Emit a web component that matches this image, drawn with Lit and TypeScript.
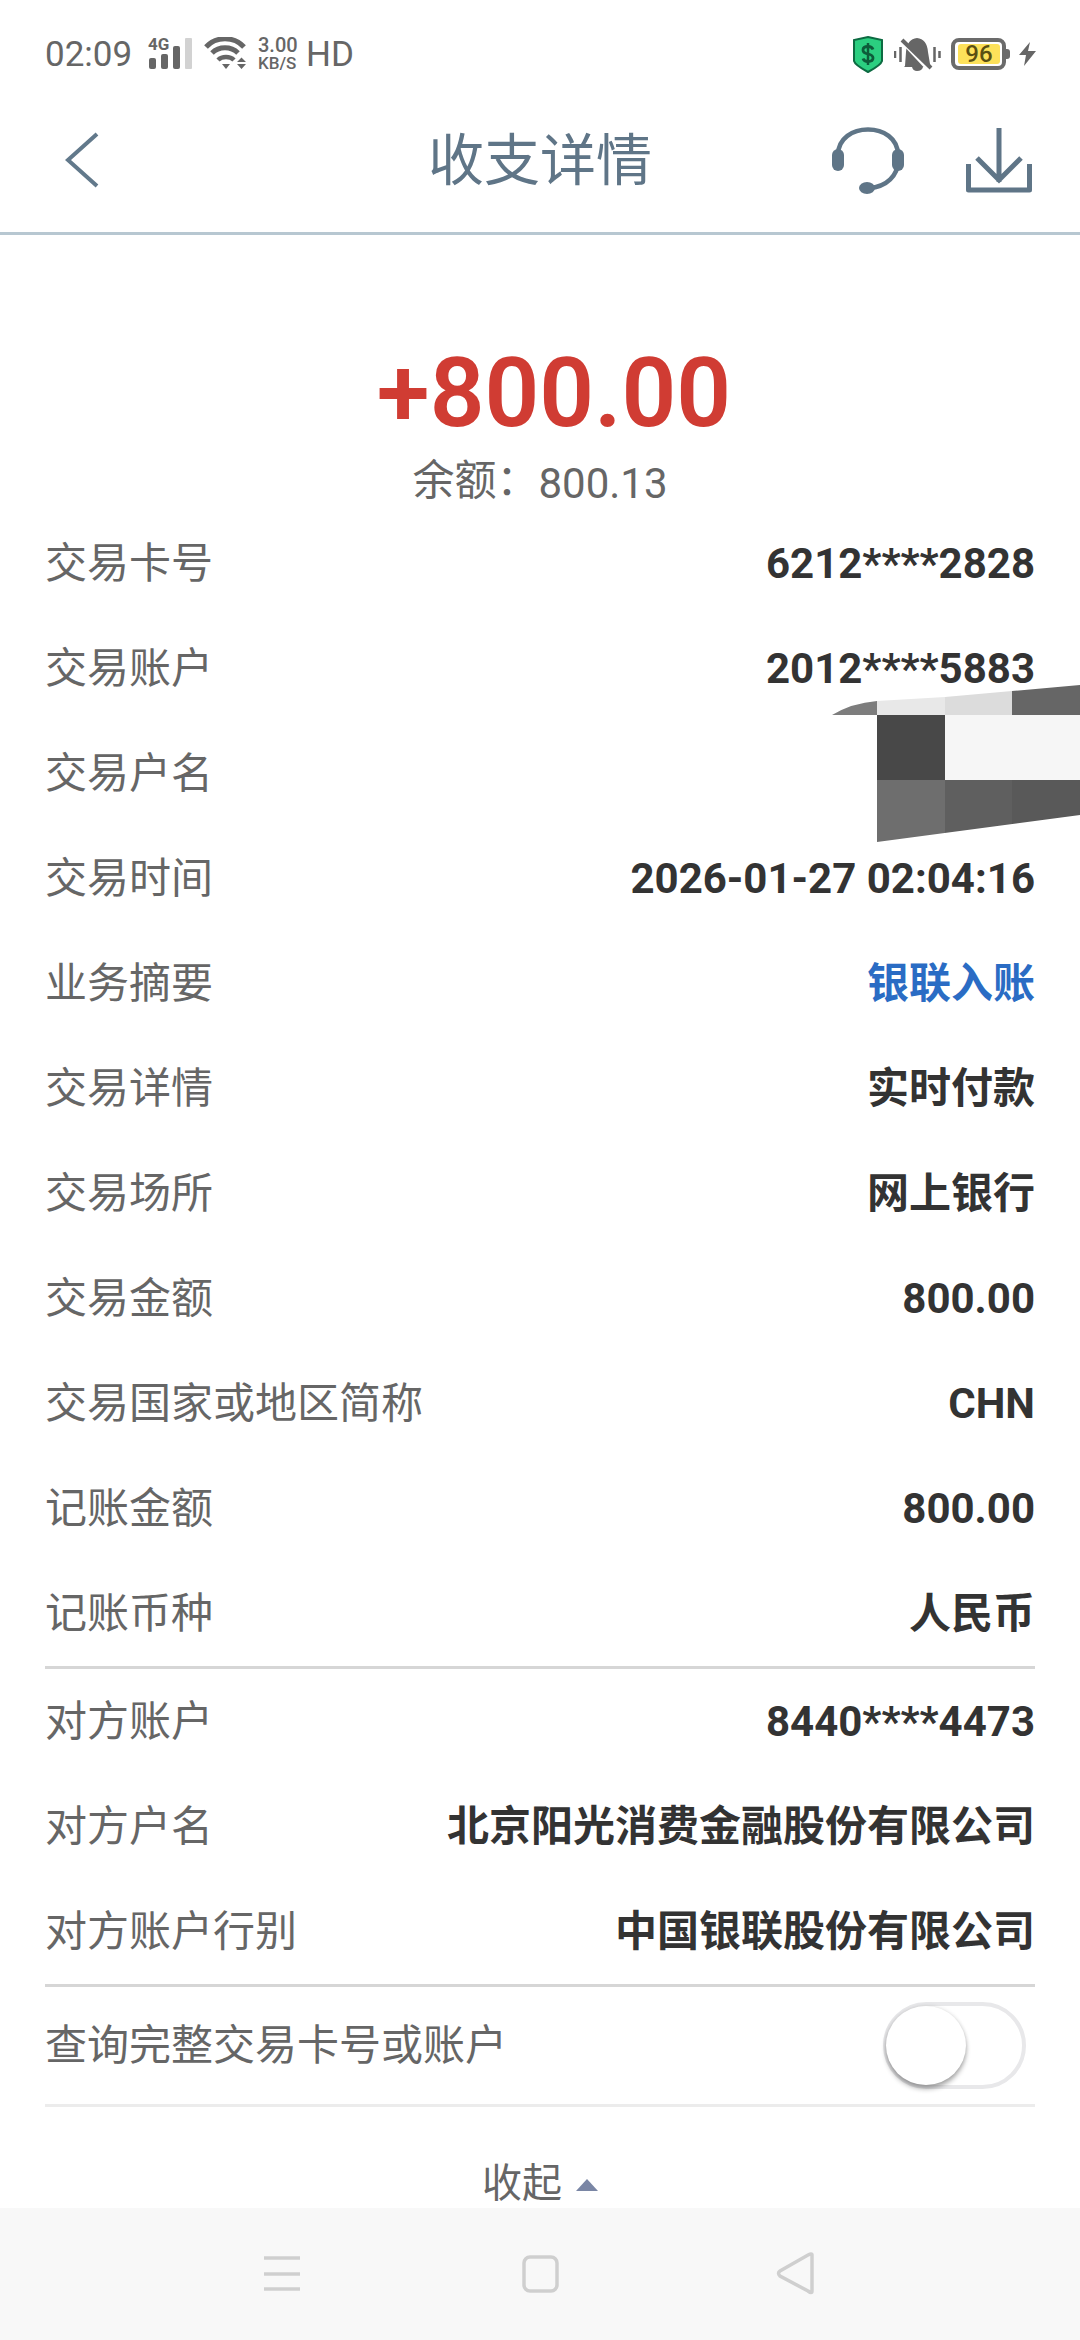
import { LitElement, css, html, svg } from 'lit';
import { customElement } from 'lit/decorators.js';

type Row = { label: string; value: string; link?: boolean };

const primaryRows: Row[] = [
  { label: '交易卡号', value: '6212****2828' },
  { label: '交易账户', value: '2012****5883' },
  { label: '交易户名', value: '' },
  { label: '交易时间', value: '2026-01-27 02:04:16' },
  { label: '业务摘要', value: '银联入账', link: true },
  { label: '交易详情', value: '实时付款' },
  { label: '交易场所', value: '网上银行' },
  { label: '交易金额', value: '800.00' },
  { label: '交易国家或地区简称', value: 'CHN' },
  { label: '记账金额', value: '800.00' },
  { label: '记账币种', value: '人民币' },
];

const partyRows: Row[] = [
  { label: '对方账户', value: '8440****4473' },
  { label: '对方户名', value: '北京阳光消费金融股份有限公司' },
  { label: '对方账户行别', value: '中国银联股份有限公司' },
];

@customElement('app-root')
export class AppRoot extends LitElement {
  static styles = css`
    :host {
      display: block;
      width: 1080px;
      height: 2340px;
      background: #fff;
      overflow: hidden;
      position: relative;
      font-family: Roboto, 'Noto Sans CJK SC', sans-serif;
    }
    .page {
      display: flex;
      flex-direction: column;
      height: 2340px;
    }
    .status {
      display: flex;
      align-items: center;
      justify-content: space-between;
      height: 108px;
      padding: 0 44px 0 45px;
      color: #666;
      flex: none;
    }
    .status-left,
    .status-right {
      display: flex;
      align-items: center;
    }
    .time {
      font-size: 35px;
      width: 104px;
    }
    .signal {
      position: relative;
      width: 44px;
      height: 32px;
      margin-right: 11px;
    }
    .signal span {
      position: absolute;
      left: -1px;
      top: -1px;
      font-size: 17px;
      font-weight: 700;
      line-height: 14px;
    }
    .speed {
      display: flex;
      flex-direction: column;
      font-size: 20px;
      line-height: 18px;
      width: 48px;
      margin-left: 10px;
      font-weight: 500;
    }
    .speed small {
      font-size: 17px;
    }
    .hd {
      font-size: 35px;
    }
    .battery {
      box-sizing: border-box;
      width: 55px;
      height: 32px;
      border: 4px solid #6b6b6b;
      border-radius: 8px;
      padding: 2px 2px 2px 3px;
      display: flex;
    }
    .battery span {
      flex: 1;
      background: #fde15a;
      border-radius: 3px;
      color: #5a4f12;
      font-size: 24px;
      line-height: 20px;
      font-weight: 500;
      text-align: center;
    }
    .battery-wrap {
      display: flex;
      align-items: center;
      margin: 0 9px 0 10px;
    }
    .nub {
      width: 4px;
      height: 10px;
      background: #6b6b6b;
      border-radius: 0 3px 3px 0;
    }
    .nav {
      position: relative;
      display: flex;
      align-items: center;
      justify-content: space-between;
      box-sizing: border-box;
      height: 127px;
      padding: 0 48px 20px 65px;
      border-bottom: 3px solid #b7c7d1;
      flex: none;
    }
    .nav-title {
      position: absolute;
      left: 0;
      right: 0;
      top: 18px;
      text-align: center;
      font-size: 56px;
      line-height: 70px;
      color: #5f7587;
    }
    .nav-actions {
      display: flex;
      gap: 61px;
      align-items: center;
    }
    .main {
      flex: 1;
      min-height: 0;
      display: flex;
      flex-direction: column;
      padding: 0 45px;
      position: relative;
    }
    .summary {
      height: 276px;
      flex: none;
      box-sizing: border-box;
      padding-top: 103px;
      text-align: center;
    }
    .amount {
      font-size: 96px;
      line-height: 110px;
      font-weight: 600;
      color: #d03c33;
      padding-left: 28px;
    }
    .balance {
      font-size: 42px;
      line-height: 50px;
      color: #666;
      margin-top: 8px;
    }
    .balance span {
      vertical-align: 3px;
    }
    .row {
      display: flex;
      justify-content: space-between;
      align-items: center;
      height: 105px;
      font-size: 42px;
    }
    .label {
      color: #666;
      padding-bottom: 9px;
    }
    .value {
      color: #333;
      font-weight: 700;
    }
    .value.cjk {
      padding-bottom: 9px;
    }
    .value.link {
      color: #2a6cc4;
    }
    .rule {
      height: 3px;
      background: #d6d6d6;
      flex: none;
    }
    .rule.light {
      background: #ececec;
    }
    .toggle-row {
      height: 117px;
    }
    .toggle {
      position: relative;
      box-sizing: border-box;
      width: 143px;
      height: 87px;
      margin-right: 9px;
      border: 4px solid #e8e8ea;
      border-radius: 44px;
      background: #fff;
    }
    .knob {
      position: absolute;
      left: -1px;
      top: 0;
      width: 80px;
      height: 79px;
      border-radius: 50%;
      background: #fff;
      box-shadow: 0 4px 5px rgba(0, 0, 0, 0.32), 0 0 4px rgba(0, 0, 0, 0.12);
    }
    .collapse {
      flex: 1;
      display: flex;
      justify-content: center;
      align-items: flex-end;
      gap: 14px;
      padding-bottom: 3px;
      font-size: 40px;
      line-height: 42px;
      color: #666;
    }
    .caret {
      width: 0;
      height: 0;
      border-left: 11px solid transparent;
      border-right: 11px solid transparent;
      border-bottom: 12px solid #7a86a5;
      margin-bottom: 14px;
    }
    .mosaic {
      position: absolute;
      left: 832px;
      top: 685px;
    }
    .softkeys {
      flex: none;
      height: 132px;
      background: #f8f8f8;
      position: relative;
    }
    .softkeys svg {
      position: absolute;
      left: 0;
      top: 0;
    }
  `;

  private wifiIcon() {
    return html`<svg width="44" height="34" viewBox="0 0 44 34" fill="none">
      <path d="M2 10 C12 -1 30 -1 40 10" stroke="#666" stroke-width="5" />
      <path d="M8 16 C15 9 27 9 34 16" stroke="#666" stroke-width="5" />
      <path d="M14 23 C18 19 26 19 30 23" stroke="#666" stroke-width="4.5" />
      <path d="M18 27 h8 l-4 5 z" fill="#666" />
      <path d="M33 25 l4.5 -4.5 l4.5 4.5 z M33 27 h9 l-4.5 5 z" fill="#666" />
    </svg>`;
  }

  private shieldIcon() {
    return html`<svg width="30" height="37" viewBox="0 0 30 37">
      <path d="M15 1 L29 4 V25 Q28 29 15 36 Q2 29 1 25 V4 Z" fill="#2bcf80" stroke="#0d6b42" stroke-width="2" />
      <path d="M20 13.5 Q19 10.5 15 10.5 Q10 10.5 10 14 Q10 17 15 18 Q20 19 20 22 Q20 25.5 15 25.5 Q11 25.5 10 22.5" fill="none" stroke="#0d5c3a" stroke-width="2.8" />
      <path d="M15 7 V29" stroke="#0d5c3a" stroke-width="2.5" />
    </svg>`;
  }

  private bellIcon() {
    return html`<svg width="47" height="35" viewBox="0 0 47 35" style="margin-left:11px">
      <path d="M11 29 L12 15 Q13 2 23 1 Q33 2 34 15 L36 27 L37 30 H10 Z M18 30 H29 Q28 34 23 34 Q19 34 18 30 Z" fill="#666" />
      <path d="M5 1 L34 32" stroke="#fff" stroke-width="4" />
      <path d="M8 3 L37 31" stroke="#666" stroke-width="4" />
      <path d="M1 14 V21 M6.5 10 V25 M40.5 10 V25 M45.5 14 V21" stroke="#666" stroke-width="2.5" />
    </svg>`;
  }

  private boltIcon() {
    return html`<svg width="17" height="24" viewBox="0 0 17 24">
      <path d="M11 0 L0 13 H7 L5 24 L17 9 H9 Z" fill="#666" />
    </svg>`;
  }

  private backIcon() {
    return html`<svg width="34" height="56" viewBox="0 0 34 56" fill="none">
      <path d="M32 2 L3 28 L32 54" stroke="#62798b" stroke-width="4" />
    </svg>`;
  }

  private headsetIcon() {
    return html`<svg width="74" height="70" viewBox="0 0 74 70" fill="none">
      <path d="M7 30 C7 -4 67 -4 67 30" stroke="#5f7587" stroke-width="4.5" />
      <path d="M67 36 C67 50 56 62 38 63" stroke="#5f7587" stroke-width="4.5" />
      <rect x="1" y="24" width="12" height="22" rx="6" fill="#5f7587" />
      <rect x="61" y="24" width="12" height="22" rx="6" fill="#5f7587" />
      <ellipse cx="36" cy="63" rx="8" ry="6" fill="#5f7587" />
    </svg>`;
  }

  private downloadIcon() {
    return html`<svg width="66" height="66" viewBox="0 0 66 66" fill="none">
      <path d="M33 1 V55 M11 31 L33 53 L55 31" stroke="#5f7587" stroke-width="5" />
      <path d="M2.5 37 V63 H63.5 V37" stroke="#5f7587" stroke-width="5" stroke-linejoin="round" />
    </svg>`;
  }

  private mosaic() {
    // censored block over the account name, clipped to its slanted outline
    const cells = [
      [0, 0, 45, 30, '#7d7d7d'],
      [45, 0, 68, 30, '#e8e8e8'],
      [113, 0, 67, 30, '#dcdcdc'],
      [180, 0, 68, 30, '#666666'],
      [45, 30, 68, 65, '#484848'],
      [113, 30, 135, 65, '#f6f6f6'],
      [45, 95, 68, 65, '#6e6e6e'],
      [113, 95, 67, 65, '#5f5f5f'],
      [180, 95, 68, 65, '#595959'],
    ];
    return html`<svg class="mosaic" width="248" height="160" viewBox="0 0 248 160">
      <defs>
        <clipPath id="blur-edge">
          <path d="M0 30 Q20 18 45 16 L113 12 L180 6 L248 0 V130 L45 157 V30 Z" />
        </clipPath>
      </defs>
      <g clip-path="url(#blur-edge)">
        ${cells.map(
          ([x, y, w, h, fill]) => svg`<rect x=${x} y=${y} width=${w} height=${h} fill=${fill} />`,
        )}
      </g>
    </svg>`;
  }

  private renderRow(row: Row) {
    const cjk = /[^\x00-\x7f]/.test(row.value);
    return html`<div class="row">
      <span class="label">${row.label}</span>
      <span class="value ${row.link ? 'link' : ''} ${cjk ? 'cjk' : ''}">${row.value}</span>
    </div>`;
  }

  render() {
    return html`
      <div class="page">
        <div class="status">
          <div class="status-left">
            <span class="time">02:09</span>
            <div class="signal">
              <span>4G</span>
              <svg width="44" height="32" viewBox="0 0 44 32">
                <rect x="0" y="20" width="7" height="11" rx="2" fill="#666" />
                <rect x="12" y="16" width="7" height="15" rx="2" fill="#666" />
                <rect x="24" y="8" width="7" height="23" rx="2" fill="#666" />
                <rect x="36" y="0" width="7" height="31" rx="1" fill="#d2d2d2" />
              </svg>
            </div>
            ${this.wifiIcon()}
            <div class="speed"><span>3.00</span><small>KB/S</small></div>
            <span class="hd">HD</span>
          </div>
          <div class="status-right">
            ${this.shieldIcon()} ${this.bellIcon()}
            <div class="battery-wrap">
              <div class="battery"><span>96</span></div>
              <div class="nub"></div>
            </div>
            ${this.boltIcon()}
          </div>
        </div>
        <div class="nav">
          ${this.backIcon()}
          <div class="nav-title">收支详情</div>
          <div class="nav-actions">${this.headsetIcon()} ${this.downloadIcon()}</div>
        </div>
        <div class="main">
          <div class="summary">
            <div class="amount">+800.00</div>
            <div class="balance"><span>余额：</span>800.13</div>
          </div>
          ${primaryRows.map((r) => this.renderRow(r))}
          <div class="rule"></div>
          ${partyRows.map((r) => this.renderRow(r))}
          <div class="rule"></div>
          <div class="row toggle-row">
            <span class="label">查询完整交易卡号或账户</span>
            <div class="toggle"><div class="knob"></div></div>
          </div>
          <div class="rule light"></div>
          <div class="collapse"><span>收起</span><i class="caret"></i></div>
        </div>
        <div class="softkeys">
          <svg width="1080" height="132" viewBox="0 0 1080 132" fill="none" stroke="#cfcfcf" stroke-width="3.5">
            <path d="M264 50 H300 M264 66 H300 M264 81 H300" />
            <rect x="524" y="49" width="33" height="34" rx="6" />
            <path d="M812 47 L812 83 Q812 86 808 83 L780 68 Q777 65 780 63 L808 47 Q812 45 812 47 Z" />
          </svg>
        </div>
      </div>
      ${this.mosaic()}
    `;
  }
}
